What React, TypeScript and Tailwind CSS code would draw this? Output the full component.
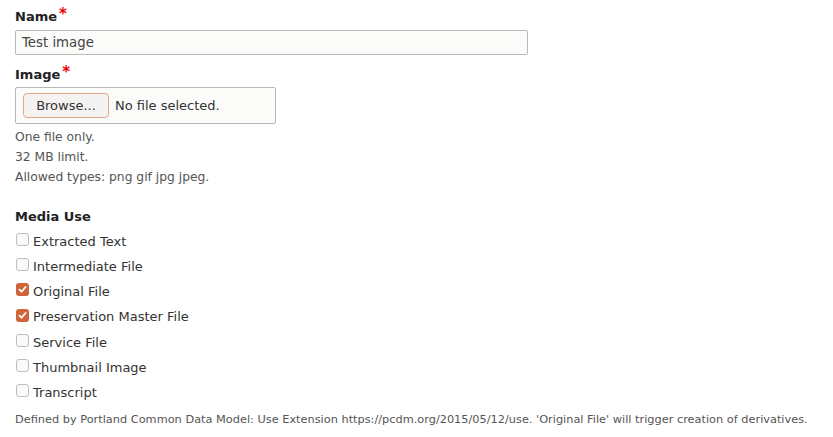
const uses = [
  { label: "Extracted Text", checked: false },
  { label: "Intermediate File", checked: false },
  { label: "Original File", checked: true },
  { label: "Preservation Master File", checked: true },
  { label: "Service File", checked: false },
  { label: "Thumbnail Image", checked: false },
  { label: "Transcript", checked: false },
];

function Check({ checked }: { checked: boolean }) {
  if (checked) {
    return (
      <span className="flex h-[13px] w-[13px] items-center justify-center rounded-[3px] bg-[#d2643a]">
        <svg width="9" height="9" viewBox="0 0 9 9" fill="none">
          <path d="M1.5 4.6 L3.6 6.7 L7.6 2" stroke="white" strokeWidth="1.8" strokeLinecap="round" strokeLinejoin="round" />
        </svg>
      </span>
    );
  }
  return <span className="block h-[13px] w-[13px] rounded-[3px] border border-[#bdbdbd] bg-[#fafafa]" />;
}

function Label({ children }: { children: React.ReactNode }) {
  return (
    <div className="flex items-start text-[13px] font-bold leading-[18px] text-[#222]">
      {children}
      <span className="ml-[2px] -mt-[3px] text-[15px] text-[#e00]">*</span>
    </div>
  );
}

export default function App() {
  return (
    <div className="min-h-[437px] w-[833px] bg-white pl-[15px] pt-[8px] font-['DejaVu_Sans',sans-serif] text-[#333]">
      <Label>Name</Label>
      <div className="mt-[4px] flex h-[25px] w-[513px] items-center rounded-[2px] border border-[#b8b8b8] bg-[#fbfbfa] px-[6px] text-[13.3px] text-[#444]">
        Test image
      </div>

      <div className="mt-[11px]">
        <Label>Image</Label>
      </div>
      <div className="mt-[3px] flex h-[37px] w-[261px] items-center rounded-[2px] border border-[#b8b8b8] bg-[#fbfbfa] px-[7px]">
        <span className="flex h-[25px] w-[86px] items-center justify-center rounded-[4px] border border-[#e2a68c] bg-[#f4f3f1] text-[13px] text-[#333]">
          Browse...
        </span>
        <span className="ml-[6px] text-[13px] text-[#333]">No file selected.</span>
      </div>

      <div className="mt-[3px] text-[12.3px] leading-[20px] text-[#555]">
        <div>One file only.</div>
        <div>32 MB limit.</div>
        <div>Allowed types: png gif jpg jpeg.</div>
      </div>

      <div className="mt-[21px] text-[13px] font-bold leading-[18px] text-[#222]">Media Use</div>
      <div className="mt-[3px] flex flex-col">
        {uses.map((u) => (
          <div key={u.label} className="flex h-[25.2px] items-center gap-[4px] pl-[1px]">
            <span className="-mt-[4px]">
              <Check checked={u.checked} />
            </span>
            <span className="text-[13px] text-[#333]">{u.label}</span>
          </div>
        ))}
      </div>
      <div className="mt-[6px] text-[11.34px] text-[#555]">
        Defined by Portland Common Data Model: Use Extension https://pcdm.org/2015/05/12/use. 'Original File' will trigger creation of derivatives.
      </div>
    </div>
  );
}
